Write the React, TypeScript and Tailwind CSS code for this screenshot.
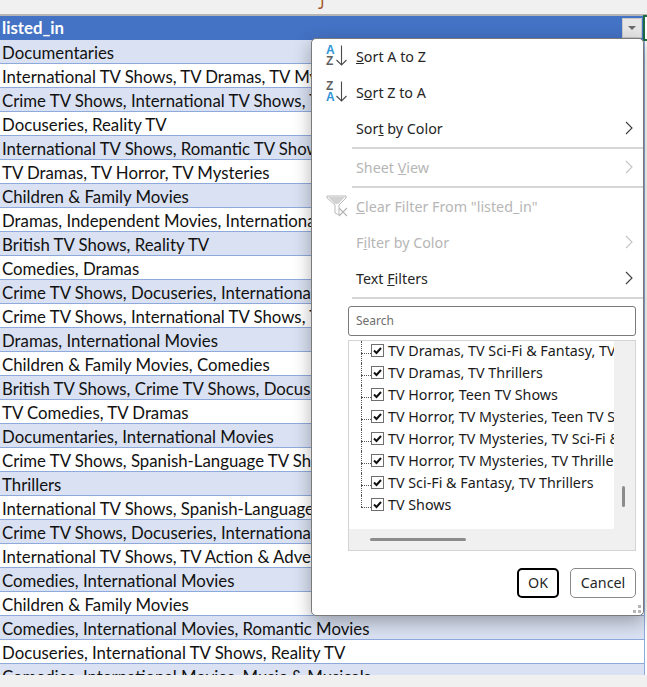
import { ReactNode } from "react";

const rows = [
  "Documentaries",
  "International TV Shows, TV Dramas, TV Mysteries",
  "Crime TV Shows, International TV Shows, TV Action & Adventure",
  "Docuseries, Reality TV",
  "International TV Shows, Romantic TV Shows, TV Comedies",
  "TV Dramas, TV Horror, TV Mysteries",
  "Children & Family Movies",
  "Dramas, Independent Movies, International Movies",
  "British TV Shows, Reality TV",
  "Comedies, Dramas",
  "Crime TV Shows, Docuseries, International TV Shows",
  "Crime TV Shows, International TV Shows, TV Dramas",
  "Dramas, International Movies",
  "Children & Family Movies, Comedies",
  "British TV Shows, Crime TV Shows, Docuseries",
  "TV Comedies, TV Dramas",
  "Documentaries, International Movies",
  "Crime TV Shows, Spanish-Language TV Shows, TV Dramas",
  "Thrillers",
  "International TV Shows, Spanish-Language TV Shows",
  "Crime TV Shows, Docuseries, International TV Shows",
  "International TV Shows, TV Action & Adventure, TV Dramas",
  "Comedies, International Movies",
  "Children & Family Movies",
  "Comedies, International Movies, Romantic Movies",
  "Docuseries, International TV Shows, Reality TV",
  "Comedies, International Movies, Music & Musicals",
];

const treeItems = [
  "TV Dramas, TV Sci-Fi & Fantasy, TV Thrillers",
  "TV Dramas, TV Thrillers",
  "TV Horror, Teen TV Shows",
  "TV Horror, TV Mysteries, Teen TV Shows",
  "TV Horror, TV Mysteries, TV Sci-Fi & Fantasy",
  "TV Horror, TV Mysteries, TV Thrillers",
  "TV Sci-Fi & Fantasy, TV Thrillers",
  "TV Shows",
];

const SortIcon = ({ desc }: { desc?: boolean }) => (
  <svg width="24" height="24" viewBox="0 0 24 24" className="block">
    <text
      x="2"
      y="8.5"
      fontSize="12"
      fontWeight="700"
      fontFamily="'Liberation Sans', sans-serif"
      fill={desc ? "#5f5f5f" : "#2f93d6"}
    >
      {desc ? "Z" : "A"}
    </text>
    <text
      x="2"
      y="20"
      fontSize="12"
      fontWeight="700"
      fontFamily="'Liberation Sans', sans-serif"
      fill={desc ? "#2f93d6" : "#5f5f5f"}
    >
      {desc ? "A" : "Z"}
    </text>
    <path d="M17.5 0.5v19.5M12.5 15l5 5 5-5" fill="none" stroke="#4a4a4a" strokeWidth="1.1" />
  </svg>
);

const FilterIcon = () => (
  <svg width="22" height="22" viewBox="0 0 22 22" className="ml-[2px] -mt-[2px] block">
    <path d="M1 1h19v2l-7 7v10l-4-2v-8L1 3z" fill="#fff" stroke="#b9b9b9" strokeWidth="1" />
    <path d="M2 2h17l-7 7H9z" fill="#d2d2d2" />
    <path d="M13 13l8 8M21 13l-8 8" fill="none" stroke="#b4b4b4" strokeWidth="1.1" />
  </svg>
);

const Chevron = ({ off }: { off?: boolean }) => (
  <svg width="8" height="14" viewBox="0 0 8 14" className="mb-[3px] block">
    <path d="M1 1l6 6-6 6" fill="none" stroke={off ? "#c4c4c4" : "#3c3c3c"} strokeWidth="1.1" />
  </svg>
);

const Sep = () => <div className="ml-[40px] h-[2px] bg-[#d6d6d6]" />;

const MenuItem = ({
  icon,
  off,
  more,
  children,
}: {
  icon?: ReactNode;
  off?: boolean;
  more?: boolean;
  children: ReactNode;
}) => (
  <div className={`flex h-9 items-center pr-[10px] ${off ? "text-[#b6b6b6]" : "text-[#262626]"}`}>
    <div className="flex w-[44px] shrink-0 justify-end pr-[1px] pl-3">
      <div className="w-[31px]">{icon}</div>
    </div>
    <div className="flex-1">{children}</div>
    {more && <Chevron off={off} />}
  </div>
);

const Checked = () => (
  <div className="mb-[3px] flex h-[13px] w-[13px] shrink-0 items-center justify-center border border-[#6f6f6f] bg-white">
    <svg width="9" height="9" viewBox="0 0 9 9" className="block">
      <path d="M1 4.5l2.5 2.5L8 2" fill="none" stroke="#111" strokeWidth="2" />
    </svg>
  </div>
);

export default function App() {
  return (
    <div className="relative flex h-[687px] w-[647px] flex-col overflow-hidden bg-white font-['Lato',sans-serif]">
      {/* column letter strip */}
      <div className="h-[16px] shrink-0 overflow-hidden border-b-2 border-[#b5b5b5] bg-[#f0f0f0] pl-[318px] text-[15px] leading-[6px] text-[#a5552a]">
        J
      </div>

      {/* header */}
      <div className="flex h-[24px] shrink-0">
        <div className="flex flex-1 items-center justify-between bg-[#4472c4] pl-[2px]">
          <span className="text-[16.8px] font-bold text-white">listed_in</span>
          <div className="mr-[1px] flex h-[20px] w-[20px] items-center justify-center border border-[#c8c8c8] bg-[#e6e6e6]">
            <div className="h-0 w-0 border-x-[4px] border-t-[4px] border-x-transparent border-t-[#6a6a6a]" />
          </div>
        </div>
        <div className="z-10 -my-[1px] h-[26px] w-[4px] border-y-2 border-l-2 border-[#1f6b42] bg-white" />
      </div>

      {/* table rows */}
      <div className="min-h-0 flex-1 overflow-hidden">
        {rows.map((r, i) => (
          <div
            key={i}
            className={`mr-[2px] h-[24px] overflow-hidden whitespace-nowrap border-b border-r border-[#8ea9db] pl-[2px] pt-[1px] text-[16.8px] leading-[24px] text-[#111] ${
              i % 2 === 0 ? "bg-[#d9e1f2]" : "bg-white"
            }`}
          >
            {r}
          </div>
        ))}
      </div>
      <div className="h-[12px] shrink-0 bg-[#f0f0f0]" />

      {/* filter dropdown */}
      <div className="absolute left-[311px] top-[38px] z-20 flex h-[578px] w-[333px] flex-col rounded-[5px] border border-[#7a7a7a] bg-white text-[14.3px] shadow-[0_6px_18px_rgba(0,0,0,0.3)] font-['Noto_Sans',sans-serif]">
        <MenuItem icon={<SortIcon />}>
          <u>S</u>ort A to Z
        </MenuItem>
        <MenuItem icon={<SortIcon desc />}>
          S<u>o</u>rt Z to A
        </MenuItem>
        <MenuItem more>
          Sor<u>t</u> by Color
        </MenuItem>
        <Sep />
        <div className="h-[1px]" />
        <MenuItem off more>
          Sheet <u>V</u>iew
        </MenuItem>
        <Sep />
        <div className="h-[1px]" />
        <MenuItem off icon={<FilterIcon />}>
          <u>C</u>lear Filter From "listed_in"
        </MenuItem>
        <MenuItem off more>
          F<u>i</u>lter by Color
        </MenuItem>
        <MenuItem more>
          Text <u>F</u>ilters
        </MenuItem>
        <Sep />

        {/* search + tree */}
        <div className="flex flex-1 flex-col pl-[36px] pr-[7px]">
          <div className="mt-[7px] flex h-[30px] shrink-0 items-center rounded-[3px] border border-[#7a7a7a] pl-[7px] text-[12px] text-[#6e6e6e]">
            Search
          </div>
          <div className="mt-[4px] flex h-[211px] shrink-0 flex-col border border-[#d4d4d4] bg-[#f0f0f0]">
            <div className="flex min-h-0 flex-1">
              <div className="relative w-[265px] overflow-hidden rounded-br-[2px] bg-white">
                {treeItems.map((t, i) => (
                  <div key={t} className="relative flex h-[22px] items-center whitespace-nowrap pl-[22px] text-[#1a1a1a]">
                    <div className="absolute left-[12px] top-0 h-[12px] border-l border-dotted border-[#555]" />
                    <div className="absolute left-[12px] top-[12px] w-[10px] border-t border-dotted border-[#555]" />
                    {i < treeItems.length - 1 && (
                      <div className="absolute left-[12px] top-[12px] h-[10px] border-l border-dotted border-[#555]" />
                    )}
                    <Checked />
                    <span className="ml-[4px] pb-[3px]">{t}</span>
                  </div>
                ))}
              </div>
              <div className="flex flex-1 items-end pb-[22px] pl-[8px]">
                <div className="h-[21px] w-[3px] rounded-full bg-[#8c8c8c]" />
              </div>
            </div>
            <div className="flex h-[21px] shrink-0 items-center pl-[21px]">
              <div className="h-[3px] w-[96px] rounded-full bg-[#8c8c8c]" />
            </div>
          </div>

          {/* buttons */}
          <div className="mt-[17px] flex justify-end gap-[11px]">
            <div className="flex h-[30px] w-[42px] items-center justify-center rounded-[5px] border-2 border-black text-[#262626]">
              OK
            </div>
            <div className="flex h-[30px] w-[66px] items-center justify-center rounded-[5px] border border-[#8a8a8a] text-[#262626]">
              Cancel
            </div>
          </div>
        </div>

        {/* resize grip */}
        <div className="absolute bottom-[2px] right-[2px] grid grid-cols-2 gap-[2px]">
          <div className="h-[2px] w-[2px]" />
          <div className="h-[3px] w-[3px] bg-[#b5b5b5]" />
          <div className="h-[3px] w-[3px] bg-[#b5b5b5]" />
          <div className="h-[3px] w-[3px] bg-[#b5b5b5]" />
        </div>
      </div>
    </div>
  );
}
